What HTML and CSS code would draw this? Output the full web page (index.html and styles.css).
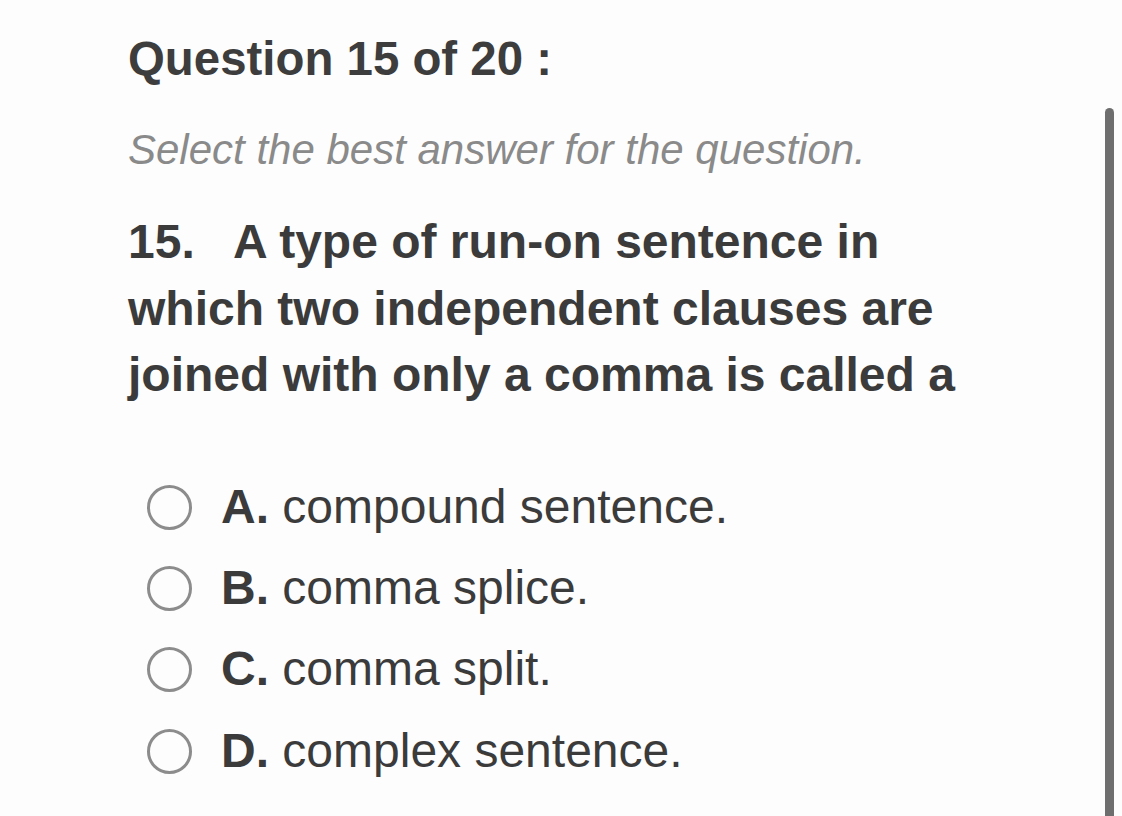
FILE: index.html
```html
<!DOCTYPE html>
<html lang="en">
<head>
<meta charset="utf-8">
<title>Question 15 of 20</title>
<link rel="stylesheet" href="styles.css">
</head>
<body>
<div class="page">
  <main class="quiz">
    <h1 class="title">Question 15 of 20 :</h1>
    <p class="hint">Select the best answer for the question.</p>
    <p class="question">15.&nbsp;&nbsp; A type of run-on sentence in which two independent clauses are joined with only a comma is called a</p>
    <ul class="options">
      <li class="option"><span class="radio"></span><span class="label"><b>A.</b> compound sentence.</span></li>
      <li class="option"><span class="radio"></span><span class="label"><b>B.</b> comma splice.</span></li>
      <li class="option"><span class="radio"></span><span class="label"><b>C.</b> comma split.</span></li>
      <li class="option"><span class="radio"></span><span class="label"><b>D.</b> complex sentence.</span></li>
    </ul>
  </main>
  <div class="scrollbar"><div class="thumb"></div></div>
</div>
</body>
</html>
```
FILE: styles.css
```css
html, body {
  margin: 0;
  padding: 0;
  background: #fdfdfd;
  height: 100%;
  overflow: hidden;
}
body {
  font-family: "Liberation Sans", Arial, Helvetica, sans-serif;
  color: #3b3b3b;
}
.page {
  display: flex;
  height: 816px;
}
.quiz {
  flex: 1;
  padding: 31px 0 0 128px;
}
.title {
  margin: 0;
  font-size: 47.4px;
  line-height: 56px;
  font-weight: 700;
  color: #3d3d3d;
}
.hint {
  margin: 38px 0 0;
  font-size: 42px;
  line-height: 50px;
  font-style: italic;
  color: #8a8a8a;
}
.question {
  margin: 34px 0 0;
  width: 880px;
  font-size: 48px;
  line-height: 66.5px;
  font-weight: 700;
  color: #3b3b3b;
}
.options {
  list-style: none;
  margin: 57px 0 0;
  padding: 0 0 0 19px;
}
.option {
  display: flex;
  align-items: center;
  height: 81.3px;
  font-size: 48px;
  line-height: 81px;
  color: #3b3b3b;
}
.radio {
  box-sizing: border-box;
  width: 45px;
  height: 45px;
  border: 3.5px solid #8c8c8c;
  border-radius: 50%;
  margin-right: 29px;
  flex: none;
  position: relative;
  top: 1px;
}
.label b {
  font-weight: 700;
}
.scrollbar {
  width: 9px;
  margin-right: 8px;
  padding-top: 108px;
  display: flex;
}
.thumb {
  flex: 1;
  background: #6e6e6e;
  border-radius: 5px 5px 0 0;
}
```
